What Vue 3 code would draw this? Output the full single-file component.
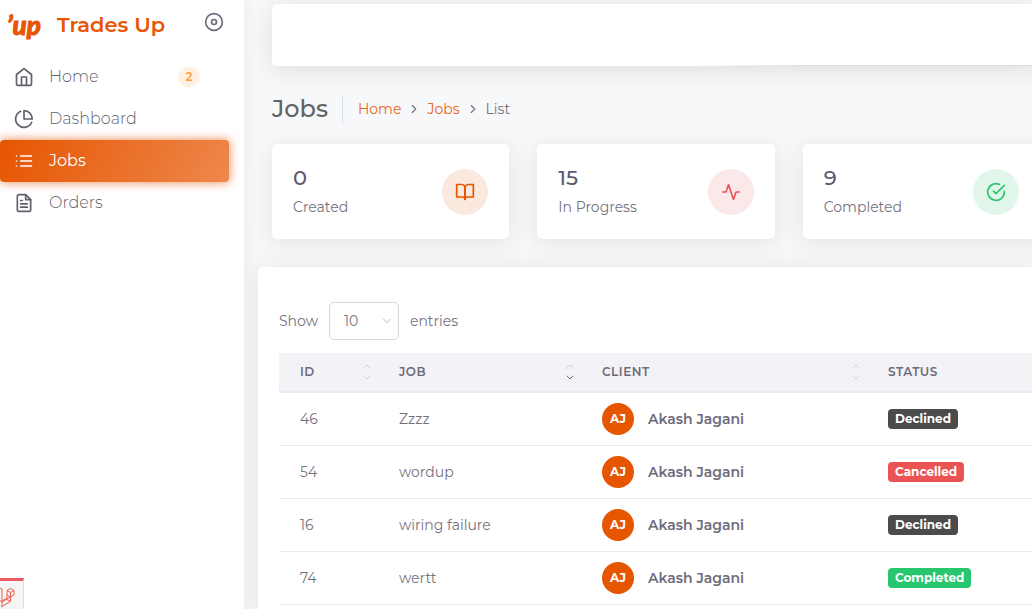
<script setup>
import { ref } from 'vue'

const pageSize = ref('10')

const nav = [
  { label: 'Home', icon: 'home', badge: '2' },
  { label: 'Dashboard', icon: 'pie' },
  { label: 'Jobs', icon: 'list', active: true },
  { label: 'Orders', icon: 'file' },
]

const stats = [
  { value: '0', label: 'Created', icon: 'book', tone: 'orange' },
  { value: '15', label: 'In Progress', icon: 'activity', tone: 'red' },
  { value: '9', label: 'Completed', icon: 'check', tone: 'green' },
]

const icons = {
  home: ['M3 9l9-7 9 7v11a2 2 0 0 1-2 2H5a2 2 0 0 1-2-2z', 'M9 22V12h6v10'],
  pie: ['M21.21 15.89A10 10 0 1 1 8 2.83', 'M22 12A10 10 0 0 0 12 2v10z'],
  list: ['M8 6h13', 'M8 12h13', 'M8 18h13', 'M3 6h.01', 'M3 12h.01', 'M3 18h.01'],
  file: ['M14 2H6a2 2 0 0 0-2 2v16a2 2 0 0 0 2 2h12a2 2 0 0 0 2-2V8z', 'M14 2v6h6', 'M16 13H8', 'M16 17H8', 'M10 9H8'],
  book: ['M2 3h6a4 4 0 0 1 4 4v14a3 3 0 0 0-3-3H2z', 'M22 3h-6a4 4 0 0 0-4 4v14a3 3 0 0 1 3-3h7z'],
  activity: ['M22 12h-4l-3 9L9 3l-3 9H2'],
  check: ['M22 11.08V12a10 10 0 1 1-5.93-9.14', 'M22 4L12 14.01l-3-3'],
}

const columns = [
  { key: 'id', label: 'ID', sort: 'none' },
  { key: 'job', label: 'JOB', sort: 'desc' },
  { key: 'client', label: 'CLIENT', sort: 'none' },
  { key: 'status', label: 'STATUS' },
]

const jobs = [
  { id: 46, job: 'Zzzz', status: 'Declined' },
  { id: 54, job: 'wordup', status: 'Cancelled' },
  { id: 16, job: 'wiring failure', status: 'Declined' },
  { id: 74, job: 'wertt', status: 'Completed' },
]
</script>

<template>
  <div class="page">
    <aside class="sidebar">
      <div class="brand">
        <a href="#" class="brand-link">
          <span class="logo" aria-hidden="true">’up</span>
          <span class="brand-name">Trades Up</span>
        </a>
        <button class="toggle" type="button" aria-label="Toggle menu">
          <svg viewBox="0 0 24 24" class="icon"><circle cx="12" cy="12" r="10" /><circle cx="12" cy="12" r="3" /></svg>
        </button>
      </div>
      <nav class="menu">
        <a v-for="item in nav" :key="item.label" href="#" class="menu-item" :class="{ active: item.active }">
          <svg viewBox="0 0 24 24" class="icon"><path v-for="d in icons[item.icon]" :key="d" :d="d" /></svg>
          <span class="menu-label">{{ item.label }}</span>
          <span v-if="item.badge" class="count">{{ item.badge }}</span>
        </a>
      </nav>
    </aside>

    <main class="main">
      <header class="topbar"></header>

      <div class="heading">
        <h1>Jobs</h1>
        <nav class="crumbs" aria-label="Breadcrumb">
          <a href="#">Home</a>
          <svg viewBox="0 0 24 24" class="chevron"><path d="M9 18l6-6-6-6" /></svg>
          <a href="#">Jobs</a>
          <svg viewBox="0 0 24 24" class="chevron"><path d="M9 18l6-6-6-6" /></svg>
          <span>List</span>
        </nav>
      </div>

      <section class="stats">
        <article v-for="s in stats" :key="s.label" class="stat">
          <div>
            <h2>{{ s.value }}</h2>
            <p>{{ s.label }}</p>
          </div>
          <span class="bubble" :class="s.tone">
            <svg viewBox="0 0 24 24" class="icon"><path v-for="d in icons[s.icon]" :key="d" :d="d" /></svg>
          </span>
        </article>
      </section>

      <section class="panel">
        <div class="length">
          <label for="page-size">Show</label>
          <select id="page-size" v-model="pageSize">
            <option>10</option>
            <option>25</option>
            <option>50</option>
          </select>
          <span>entries</span>
        </div>
        <table>
          <colgroup>
            <col class="c-id" /><col class="c-job" /><col class="c-client" /><col />
          </colgroup>
          <thead>
            <tr>
              <th v-for="c in columns" :key="c.key" scope="col">
                <div class="th">
                  <span>{{ c.label }}</span>
                  <svg v-if="c.sort" class="sort" :class="c.sort" viewBox="0 0 10 18">
                    <path d="M2 5l3-3 3 3" />
                    <path class="down" d="M2 13l3 3 3-3" />
                  </svg>
                </div>
              </th>
            </tr>
          </thead>
          <tbody>
            <tr v-for="j in jobs" :key="j.id">
              <td>{{ j.id }}</td>
              <td>{{ j.job }}</td>
              <td>
                <div class="client"><span class="avatar">AJ</span><span class="name">Akash Jagani</span></div>
              </td>
              <td>
                <div class="client"><span class="status" :class="j.status.toLowerCase()">{{ j.status }}</span></div>
              </td>
            </tr>
          </tbody>
        </table>
      </section>
    </main>

    <button class="debug" type="button" aria-label="Open debug bar">
      <svg viewBox="0 0 24 24">
        <path d="M0 3l2 1v12l5-3V5.500l3.500-2 3.500 2v4.500l-3.500 2v4.500L1 22M7 5.500l3.500 2 3.500-2M10.500 7.500V12M7 10l3.500 2M10.500 12L2 17v4.500M2 17l-3-2M10.500 16.500L7 14.500" />
      </svg>
    </button>
  </div>
</template>

<style>
body {
  margin: 0;
}
</style>

<style scoped>
.page {
  display: flex;
  height: 100vh;
  overflow: hidden;
  background: #f7f8f9;
  color: #75727e;
  font-family: Montserrat, Inter, "Open Sans", sans-serif;
  font-size: 14px;
  line-height: 20px;
}
a {
  text-decoration: none;
}
button {
  border: 0;
  padding: 0;
}
.icon,
.chevron,
.sort {
  fill: none;
  stroke: currentColor;
  stroke-width: 2;
  stroke-linecap: round;
  stroke-linejoin: round;
}
.sidebar {
  flex: 0 0 244px;
  background: #fff;
  box-shadow: 0 0 15px rgba(34, 41, 47, 0.07);
}
.brand {
  display: flex;
  align-items: center;
  justify-content: space-between;
  height: 50px;
  margin-bottom: 6px;
  padding: 0 20px 0 7px;
}
.brand-link {
  display: flex;
  align-items: center;
  color: #e65604;
}
.logo {
  width: 50px;
  font: italic 900 26px/32px Lato, sans-serif;
  -webkit-text-stroke: 1px #e65604;
}
.brand-name {
  font-size: 21px;
  font-weight: 600;
}
.toggle {
  display: flex;
  margin-bottom: 6px;
  background: none;
  color: #6e6b7b;
}
.toggle .icon,
.menu-item .icon {
  width: 20px;
  height: 20px;
}
.menu-item {
  display: flex;
  align-items: center;
  height: 42px;
  box-sizing: border-box;
  margin-right: 15px;
  padding: 0 29px 0 14px;
  color: #625f6e;
  font-size: 16px;
}
.menu-label {
  flex: 1;
  margin-left: 15px;
  font-weight: 300;
}
.active {
  border-radius: 4px;
  background: linear-gradient(118deg, #e65500, rgba(230, 85, 0, 0.7));
  box-shadow: 0 0 10px 1px rgba(230, 85, 0, 0.6);
  color: #fff;
}
.active .menu-label {
  font-weight: 400;
}
.count {
  width: 22px;
  border-radius: 10px;
  background: #fff0e1;
  color: #ff9f43;
  font-size: 12px;
  font-weight: 600;
  text-align: center;
}
.main {
  flex: 1;
  min-width: 0;
  display: flex;
  flex-direction: column;
  padding: 4px 0 0 28px;
}
.topbar {
  flex: 0 0 62px;
  margin-right: -8px;
  border-radius: 5px;
  background: linear-gradient(90deg, #fff 55%, #dcdcde 70%) bottom / 100% 1px no-repeat #fff;
  box-shadow: 0 4px 24px rgba(34, 41, 47, 0.12);
}
.heading {
  display: flex;
  align-items: center;
  height: 28px;
  margin: 29px 0 21px;
}
h1 {
  margin: 0;
  padding-right: 14px;
  border-right: 1px solid #d6dce1;
  color: #636363;
  font-size: 24px;
  font-weight: 500;
  line-height: 28px;
}
.crumbs {
  display: flex;
  align-items: center;
  padding-left: 15px;
}
.crumbs a {
  color: #e8661b;
}
.chevron {
  width: 14px;
  height: 14px;
  margin: 0 6px;
}
.stats {
  display: grid;
  grid-template-columns: repeat(3, 1fr);
  gap: 28px;
  margin-right: -8px;
}
.stat {
  display: flex;
  align-items: center;
  justify-content: space-between;
  height: 95px;
  box-sizing: border-box;
  padding: 0 21px;
  border-radius: 5px;
  background: #fff;
  box-shadow: 0 4px 24px rgba(34, 41, 47, 0.1);
}
.stat h2 {
  margin: 0 0 7px;
  color: #5e5873;
  font-size: 21px;
  font-weight: 500;
  line-height: 24px;
}
.stat p {
  margin: 0;
}
.bubble {
  display: grid;
  place-items: center;
  width: 46px;
  height: 46px;
  border-radius: 50%;
}
.bubble .icon {
  width: 20px;
  height: 20px;
}
.orange {
  background: #fbe9df;
  color: #e65500;
}
.red {
  background: #fbe9ea;
  color: #ea5455;
}
.green {
  background: #e2f7eb;
  color: #28c76f;
}
.panel {
  flex: 1;
  margin: 28px -8px -10px -14px;
  padding: 35px 0 0 21px;
  border-radius: 5px;
  background: #fff;
  box-shadow: 0 4px 24px rgba(34, 41, 47, 0.1);
}
.length {
  display: flex;
  align-items: center;
  gap: 11px;
  margin-bottom: 13px;
}
select {
  width: 70px;
  height: 38px;
  padding: 0 14px;
  border: 1px solid #d8d6de;
  border-radius: 5px;
  appearance: none;
  background: #fff url("data:image/svg+xml,%3Csvg xmlns='http://www.w3.org/2000/svg' viewBox='0 0 24 24' fill='none' stroke='%23d8d6de' stroke-width='2' stroke-linecap='round' stroke-linejoin='round'%3E%3Cpath d='M6 9l6 6 6-6'/%3E%3C/svg%3E") right 4px center / 14px no-repeat;
  color: #75727e;
  font: inherit;
}
table {
  width: 100%;
  table-layout: fixed;
  border-collapse: separate;
  border-spacing: 0;
}
.c-id {
  width: 99px;
}
.c-job {
  width: 203px;
}
.c-client {
  width: 286px;
}
th {
  height: 40px;
  box-sizing: border-box;
  padding: 0 6px 0 21px;
  border-bottom: 2px solid #ebe9f1;
  background: #f3f2f7;
  color: #6e6b7b;
  font-size: 12px;
  font-weight: 600;
  letter-spacing: 0.5px;
  text-align: left;
}
.th {
  display: flex;
  align-items: center;
  justify-content: space-between;
}
.sort {
  width: 10px;
  height: 18px;
  stroke: #cfcdd6;
  stroke-width: 1;
}
.desc .down {
  stroke: #6e6b7b;
}
td {
  height: 53px;
  box-sizing: border-box;
  padding: 0 0 0 21px;
  border-bottom: 1px solid #ebe9f1;
}
.client {
  display: flex;
  align-items: center;
  gap: 14px;
}
.avatar {
  width: 32px;
  border-radius: 50%;
  background: #e65500;
  color: #fff;
  font-size: 12px;
  font-weight: 700;
  line-height: 32px;
  text-align: center;
}
.name {
  color: #6e6b7b;
  font-weight: 600;
}
.status {
  padding: 0 7px;
  border-radius: 4px;
  color: #fff;
  font-size: 12px;
  font-weight: 700;
}
.declined {
  background: #4b4b4b;
}
.cancelled {
  background: #ea5455;
}
.completed {
  background: #28c76f;
}
.debug {
  position: fixed;
  left: 0;
  bottom: 0;
  width: 24px;
  height: 31px;
  overflow: hidden;
  border-top: 3px solid #ea5c63;
  border-right: 1px solid #ddd;
  background: #f5f5f5;
}
.debug svg {
  display: block;
  width: 24px;
  height: 24px;
  margin-top: 4px;
  fill: none;
  stroke: #ea5c50;
}
</style>
